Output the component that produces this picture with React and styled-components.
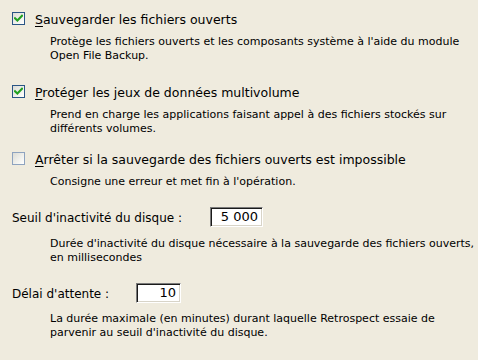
import React from "react";
import styled, { createGlobalStyle } from "styled-components";

const GlobalStyle = createGlobalStyle`
  html, body {
    margin: 0;
    padding: 0;
    background: #efebde;
  }
  body {
    width: 478px;
    height: 360px;
    overflow: hidden;
    font-family: "DejaVu Sans", Verdana, sans-serif;
    color: #000;
  }
`;

const Panel = styled.div`
  padding: 12px 0 0 12px;
  display: flex;
  flex-direction: column;
`;

const Block = styled.div`
  margin-top: ${(p) => p.$gap || 0}px;
`;

const CheckRow = styled.div`
  display: flex;
  align-items: flex-start;
  gap: 10px;
`;

const Box = styled.span`
  box-sizing: border-box;
  width: 13px;
  height: 13px;
  flex: none;
  border: 1px solid ${(p) => (p.$checked ? "#2a5585" : "#8ea3bf")};
  background: linear-gradient(135deg, #dcdcd5 0%, #f2f2ee 60%, #ffffff 100%);
  display: flex;
  align-items: center;
  justify-content: center;
`;

const Label = styled.span`
  font-size: 12.5px;
  line-height: 16px;
  white-space: nowrap;
`;

const Key = styled.u`
  text-decoration: underline;
  text-underline-offset: 2px;
`;

const Desc = styled.div`
  margin: ${(p) => p.$top || 7}px 0 0 38px;
  font-size: 11px;
  line-height: 14px;
  white-space: nowrap;
`;

const FieldRow = styled.div`
  display: flex;
  align-items: flex-start;
  height: 20px;
`;

const FieldLabel = styled.span`
  width: ${(p) => p.$width}px;
  flex: none;
  margin-top: 3px;
  font-size: 12px;
  line-height: 16px;
  white-space: nowrap;
`;

const NumberBox = styled.div`
  box-sizing: border-box;
  width: ${(p) => p.$width}px;
  height: 20px;
  background: #fff;
  border: 1px solid;
  border-color: #7a7a7a #ffffff #ffffff #7a7a7a;
  box-shadow: inset 1px 1px 0 #1a1a1a, inset -1px -1px 0 #d8d4c8;
  padding: 1px 4px 0 0;
  text-align: right;
  font-size: 13px;
  line-height: 16px;
`;

const Check = () => (
  <svg width="9" height="9" viewBox="0 0 9 9">
    <path
      d="M1 4.2 L3.4 6.6 L8 1.8"
      fill="none"
      stroke="#21a121"
      strokeWidth="2.1"
      strokeLinecap="square"
    />
  </svg>
);

const CheckOption = ({ checked, accessKey, rest, lines, gap }) => (
  <Block $gap={gap}>
    <CheckRow>
      <Box $checked={checked}>{checked && <Check />}</Box>
      <Label>
        <Key>{accessKey}</Key>
        {rest}
      </Label>
    </CheckRow>
    <Desc>
      {lines.map((l, i) => (
        <div key={i}>{l}</div>
      ))}
    </Desc>
  </Block>
);

const NumberOption = ({ label, labelWidth, value, boxWidth, lines, gap, descTop }) => (
  <Block $gap={gap}>
    <FieldRow>
      <FieldLabel $width={labelWidth}>{label}</FieldLabel>
      <NumberBox $width={boxWidth}>{value}</NumberBox>
    </FieldRow>
    <Desc $top={descTop}>
      {lines.map((l, i) => (
        <div key={i}>{l}</div>
      ))}
    </Desc>
  </Block>
);

export default function App() {
  return (
    <>
      <GlobalStyle />
      <Panel>
        <CheckOption
          checked
          accessKey="S"
          rest="auvegarder les fichiers ouverts"
          lines={[
            "Protège les fichiers ouverts et les composants système à l'aide du module",
            "Open File Backup.",
          ]}
        />
        <CheckOption
          checked
          gap={22}
          accessKey="P"
          rest="rotéger les jeux de données multivolume"
          lines={[
            "Prend en charge les applications faisant appel à des fichiers stockés sur",
            "différents volumes.",
          ]}
        />
        <CheckOption
          gap={16}
          accessKey="A"
          rest="rrêter si la sauvegarde des fichiers ouverts est impossible"
          lines={["Consigne une erreur et met fin à l'opération."]}
        />
        <NumberOption
          gap={18}
          label="Seuil d'inactivité du disque :"
          labelWidth={198}
          value="5 000"
          boxWidth={53}
          descTop={10}
          lines={[
            "Durée d'inactivité du disque nécessaire à la sauvegarde des fichiers ouverts,",
            "en millisecondes",
          ]}
        />
        <NumberOption
          gap={18}
          label="Délai d'attente :"
          labelWidth={124}
          value="10"
          boxWidth={45}
          descTop={9}
          lines={[
            "La durée maximale (en minutes) durant laquelle Retrospect essaie de",
            "parvenir au seuil d'inactivité du disque.",
          ]}
        />
      </Panel>
    </>
  );
}
